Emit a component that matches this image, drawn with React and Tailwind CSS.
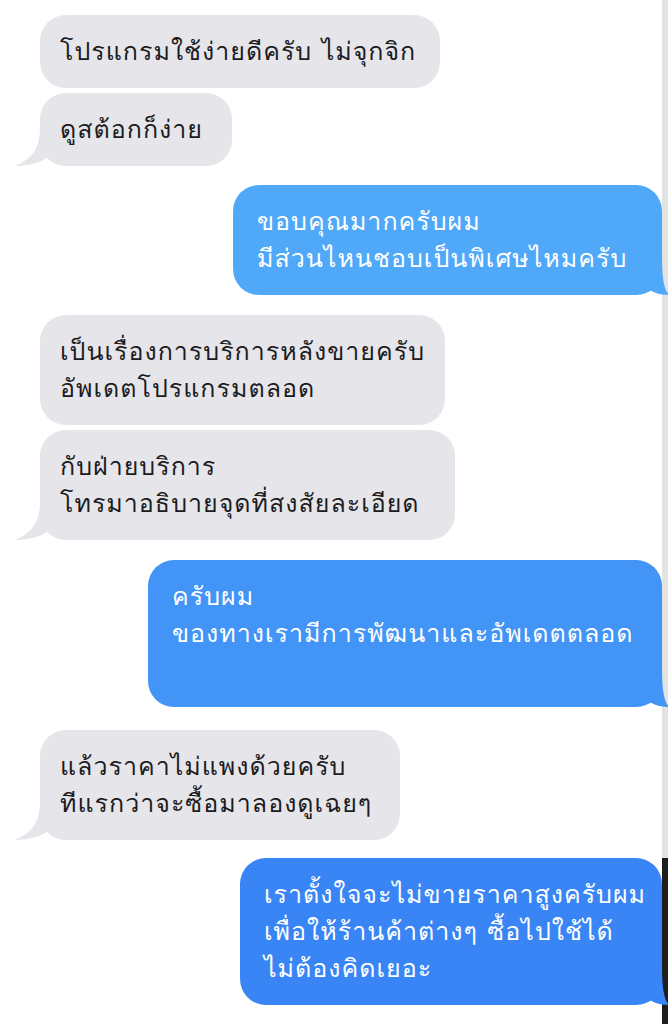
import React from 'react';

const messages = [
    { from: 'them', lines: ['โปรแกรมใช้ง่ายดีครับ ไม่จุกจิก'], tail: false, mt: 'mt-[15px]', w: 'w-[400px]' },
    { from: 'them', lines: ['ดูสต้อกก็ง่าย'], tail: true, mt: 'mt-[5px]', w: 'w-[192px]' },
    { from: 'me', lines: ['ขอบคุณมากครับผม', 'มีส่วนไหนชอบเป็นพิเศษไหมครับ'], tail: true, mt: 'mt-[19px]', bg: 'bg-[#4fa8f8]', fill: '#4fa8f8', w: 'w-[429px]' },
    { from: 'them', lines: ['เป็นเรื่องการบริการหลังขายครับ', 'อัพเดตโปรแกรมตลอด'], tail: false, mt: 'mt-[20px]', w: 'w-[405px]' },
    { from: 'them', lines: ['กับฝ่ายบริการ', 'โทรมาอธิบายจุดที่สงสัยละเอียด'], tail: true, mt: 'mt-[5px]', w: 'w-[415px]' },
    { from: 'me', lines: ['ครับผม', 'ของทางเรามีการพัฒนาและอัพเดตตลอด', '\u00a0'], tail: true, mt: 'mt-[20px]', bg: 'bg-[#4294f6]', fill: '#4294f6', w: 'w-[514px]' },
    { from: 'them', lines: ['แล้วราคาไม่แพงด้วยครับ', 'ทีแรกว่าจะซื้อมาลองดูเฉยๆ'], tail: true, mt: 'mt-[23px]', w: 'w-[360px]' },
    { from: 'me', lines: ['เราตั้งใจจะไม่ขายราคาสูงครับผม', 'เพื่อให้ร้านค้าต่างๆ ซื้อไปใช้ได้', 'ไม่ต้องคิดเยอะ'], tail: true, mt: 'mt-[18px]', bg: 'bg-[#3a85f5]', fill: '#3a85f5', w: 'w-[422px]' },
];

const GrayTail = () => (
    <svg className="absolute left-[-26px] bottom-0" width="50" height="40" viewBox="0 0 50 40">
        <path d="M26 0 C26 18 22 32 0 40 C14 40 26 37 34 31 C40 36 46 38 50 40 L50 0 Z" fill="#e5e5ea" />
    </svg>
);

const BlueTail = ({ fill }) => (
    <svg className="absolute right-[-7px] bottom-0" width="40" height="40" viewBox="0 0 40 40">
        <path d="M33 0 C33 18 34 34 40 40 C32 40 24 38 18 33 C12 38 6 40 0 40 L0 0 Z" fill={fill} />
    </svg>
);

const Bubble = ({ msg }) => {
    const mine = msg.from === 'me';
    return (
        <div className={`flex ${mine ? 'justify-end' : 'justify-start'} ${msg.mt}`}>
            <div
                className={
                    mine
                        ? `relative ${msg.bg} ${msg.w} text-white rounded-[26px] pl-[24px] py-[18px]`
                        : `relative bg-[#e5e5ea] ${msg.w} text-[#1c1c1e] rounded-[26px] ml-[40px] pl-[20px] py-[18px]`
                }
            >
                {msg.tail && (mine ? <BlueTail fill={msg.fill} /> : <GrayTail />)}
                <div className="relative text-[25px] tracking-[1px] leading-[37px] whitespace-nowrap">
                    {msg.lines.map((l, i) => (
                        <div key={i}>{l}</div>
                    ))}
                </div>
            </div>
        </div>
    );
};

const App = () => {
    return (
        <div
            className="w-[668px] h-[1024px] overflow-hidden bg-white flex"
            style={{ fontFamily: 'Loma, "Noto Sans Thai Looped", Tahoma, "Noto Sans Thai", "Noto Sans", sans-serif' }}
        >
            <div className="w-[662px] flex flex-col">
                {messages.map((m, i) => (
                    <Bubble key={i} msg={m} />
                ))}
            </div>
            <div className="w-[6px] flex flex-col">
                <div className="h-[858px] bg-[#e3e3e3]" />
                <div className="flex-1 bg-[#1e1e1e]" />
            </div>
        </div>
    );
};

export default App;
